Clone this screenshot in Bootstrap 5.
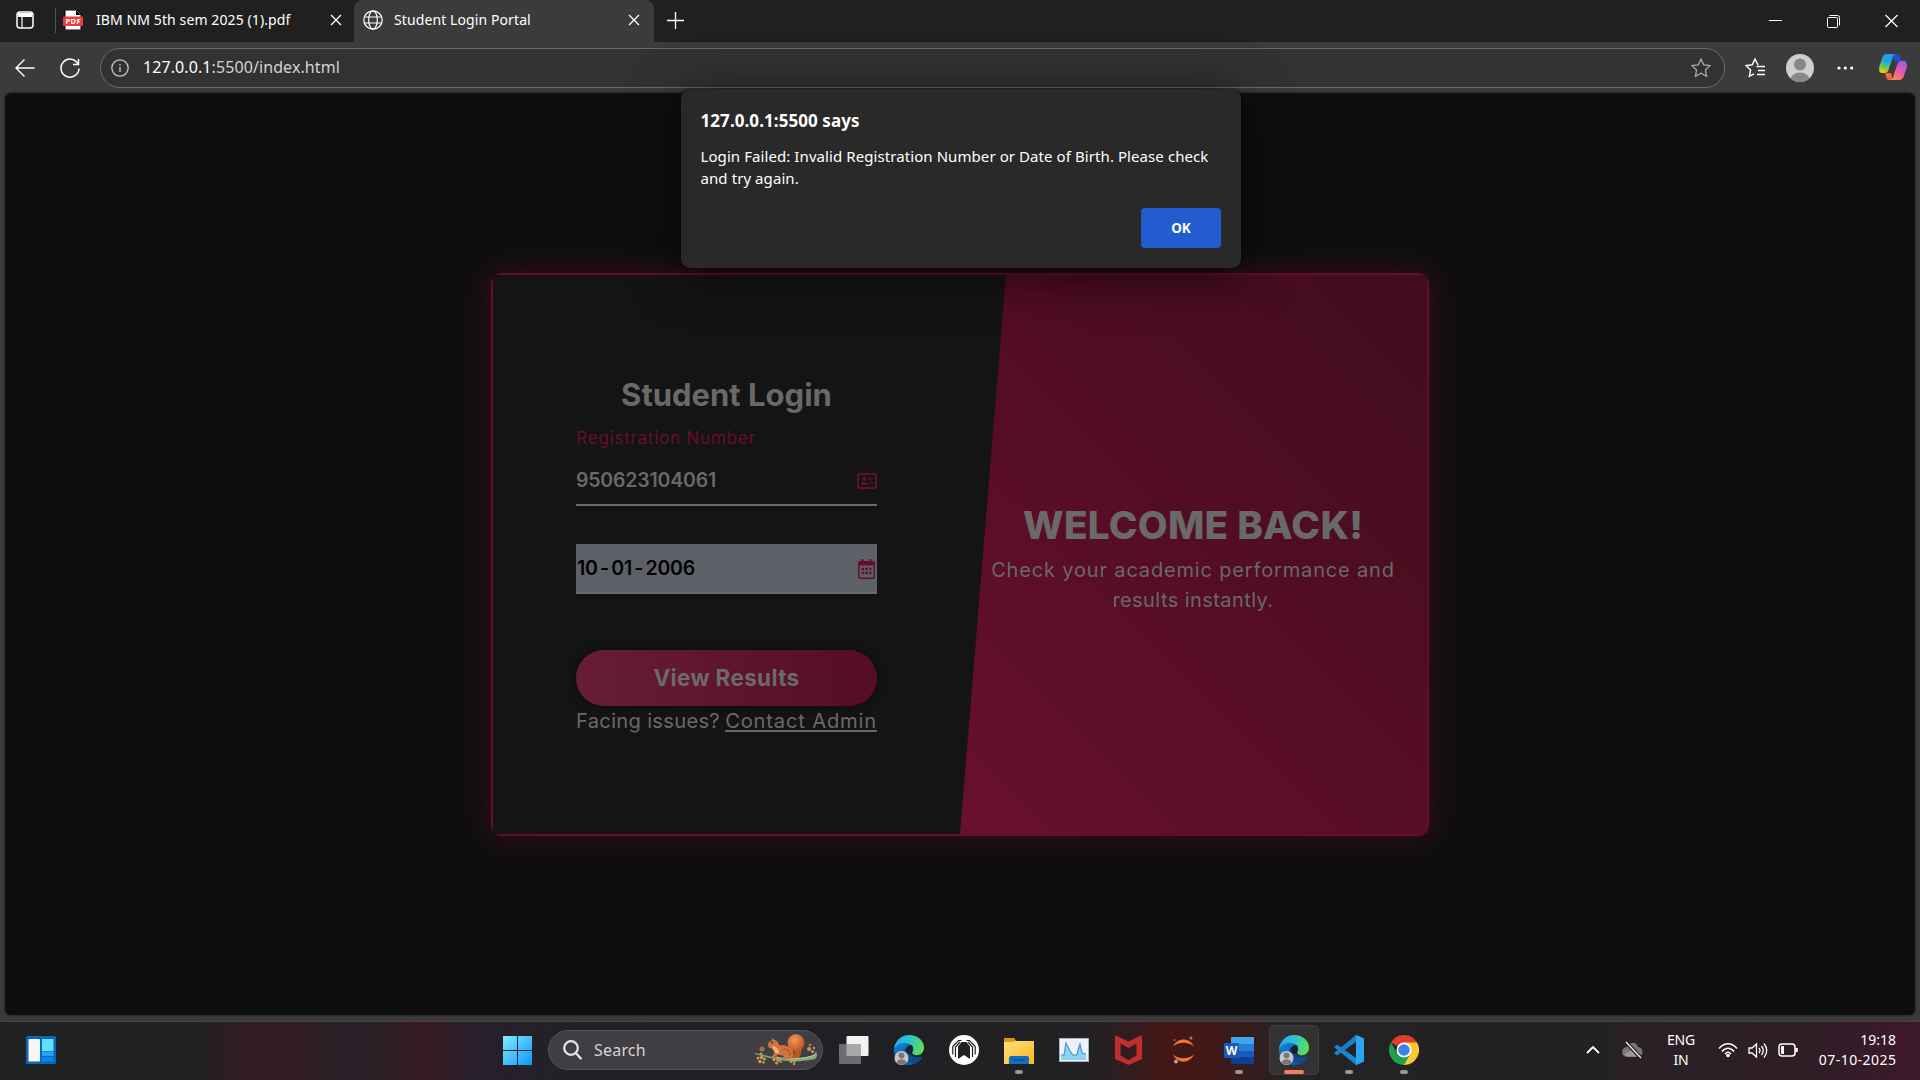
<!DOCTYPE html>
<html lang="en">
<head>
<meta charset="utf-8">
<title>Student Login Portal</title>
<link href="https://cdn.jsdelivr.net/npm/bootstrap@5.3.0/dist/css/bootstrap.min.css" rel="stylesheet">
<style>
body{width:1920px;height:1080px;overflow:hidden;background:#3b3b3b;color:#fff;font-family:"Noto Sans",sans-serif;font-size:14px}
svg{display:block;flex:none}
span,h1,h2,p{white-space:nowrap}
.tabstrip{height:42px;background:#202020}
.tab-idle{width:354px;padding-left:16px;padding-right:12px;height:40px}
.tab-live{width:300px;height:42px;background:#3b3b3b;border-radius:9px 9px 0 0;padding:0 14px 2px 9px}
.tabsep{width:1px;height:25px;background:#555;margin:0 7px 0 21px}
.tabname{letter-spacing:.1px;margin-left:11px;padding-bottom:2px}
.tab-idle .tabname{margin-left:13px}
.toolbar{height:51px;padding-left:15px}
.omnibox{width:1625px;height:40px;border:1px solid #6b6b6b;border-radius:20px;background:#323232;margin-left:20px;padding:0 13px 0 10px}
.address{font-size:16px;letter-spacing:.09px;margin-left:14px;padding-bottom:1px}
.address i{font-style:normal;color:#d2d2d2}
.viewport{height:922px;margin:0 5px;background:#0e0e10;border-radius:6px;box-shadow:0 0 3px #1a1a1a}
.panel{width:938px;height:563px;margin:180px 0 0 486px;border:2px solid #640f2a;border-radius:11px;box-shadow:0 0 31px rgba(110,14,46,.52);font-family:Inter,sans-serif;color:#696969}
.panel-in{height:559px;background:#141414}
.panel-in::before{content:"";position:absolute;inset:0 0 0 467px;background:linear-gradient(45deg,#69102d,#540d24 50%,#400d1d);clip-path:polygon(46px 0,100% 0,100% 100%,0 100%)}
.formcol{width:384px;padding:0 0 2px 83px}
.welcomecol{width:404px;margin-left:114px;padding-top:1px}
.h-login{font-size:31px;line-height:46px;font-weight:700;margin-bottom:9px}
.lab{font-size:17.3px;line-height:22px;letter-spacing:.64px;color:#640f2a;margin-bottom:7px}
.fieldx{height:50px;border-bottom:2px solid #6a6a6a;padding-top:2px;font-size:19.5px;font-weight:600;letter-spacing:-.19px}
.dob{margin-top:38px;background:#5d6067;color:#000;padding-left:1px}
.dsh{padding:0 2.3px}
.btn-view{height:56px;margin-top:56px;border:0;border-radius:28px;background:linear-gradient(90deg,#681d37,#560c24);box-shadow:0 0 10px rgba(0,0,0,.5);color:#6a6a6a;font-size:22.5px;font-weight:700;letter-spacing:.33px}
.help{font-size:20.2px;line-height:30px;letter-spacing:.28px}
.help u{letter-spacing:.8px;text-decoration-thickness:2px;text-underline-offset:2px}
.h-welcome{font-size:38.7px;line-height:60px;font-weight:800;letter-spacing:.24px}
.sub{font-size:20px;line-height:30px;letter-spacing:.84px}
.sub .second{letter-spacing:.43px}
.alertbox{left:681px;top:89px;width:560px;height:179px;background:#292929;border-radius:9px;box-shadow:0 8px 50px rgba(0,0,0,.6),0 0 2px #000;padding:22px 20px 20px 19.500px}
.alertbox .ttl{font-size:17px;line-height:20px;font-weight:700;letter-spacing:.07px;margin-bottom:14px}
.alertbox .msg{font-size:15px;line-height:22px;letter-spacing:.08px}
.btn-ok{width:80px;height:40px;background:#235ccf;border-radius:4px;font-size:13.5px;font-weight:700}
.taskbar{height:59px;margin-top:6px;padding-bottom:2px;background:linear-gradient(90deg,#202222 0,#202222 190px,#321c24 250px,#301c24 310px,#2a1f26 335px,#2a1f26 370px,#351b23 410px,#321a24 440px,#281e2e 470px,#232126 560px,#202024 700px,#212124 1090px,#451717 1170px,#401818 1215px,#2a2022 1280px,#232224 1330px,#212224 1600px,#2a2026 1625px,#2f1e26 1810px,#3d182b 1910px);border-top:1px solid #444}
.findbox{width:275px;height:40px;border-radius:20px;background:#403e43;border:1px solid #555358;margin:0 3px 0 16px;padding-left:14px}
.findbox span{font-size:16px;letter-spacing:.2px;color:#d4d4d4;margin-left:12px}
.app{width:55px;height:58px}
.app.live::before{content:"";position:absolute;left:3px;top:4px;width:50px;height:50px;background:#343133;border:1px solid #413d40;border-radius:5px}
.app.run::after,.app.live::after{content:"";position:absolute;left:24px;top:49px;width:8px;height:4px;border-radius:2px;background:#98969a}
.app.live::after{left:18px;width:20px;background:#f67c63}
.app svg{position:relative}
.lang{width:30px;line-height:20px;margin-left:22px;letter-spacing:-.2px}
.clock{width:80px;line-height:20px;margin-left:18px}
.clock .day{letter-spacing:.45px;margin-right:-.4px}
</style>
<script src="https://cdn.jsdelivr.net/npm/bootstrap@5.3.0/dist/js/bootstrap.bundle.min.js"></script>
</head>
<body>
<svg width="0" height="0" class="position-absolute">
<defs>
<linearGradient id="eg1" x1="0" y1="0.3" x2="1" y2="0.5"><stop offset="0" stop-color="#28a8e8"/><stop offset=".5" stop-color="#2cc3d0"/><stop offset="1" stop-color="#5fe04e"/></linearGradient>
<linearGradient id="eg2" x1="0" y1="0" x2="1" y2="1"><stop offset="0" stop-color="#1583d8"/><stop offset="1" stop-color="#0b4f9c"/></linearGradient>
<linearGradient id="fold" x1="0" y1="0" x2="1" y2="1"><stop offset="0" stop-color="#ffe07a"/><stop offset="1" stop-color="#f9b81f"/></linearGradient>
<linearGradient id="win" x1="0" y1="0" x2="1" y2="1"><stop offset="0" stop-color="#7cecff"/><stop offset="1" stop-color="#0d97fb"/></linearGradient>
<linearGradient id="cpa" x1="0.6" y1="0" x2="0.3" y2="1"><stop offset="0" stop-color="#2399f2"/><stop offset=".4" stop-color="#22a5e0"/><stop offset=".7" stop-color="#6bc558"/><stop offset="1" stop-color="#f7c916"/></linearGradient>
<linearGradient id="cpb" x1="0.6" y1="0" x2="0.2" y2="1"><stop offset="0" stop-color="#a259f0"/><stop offset=".5" stop-color="#e85aa0"/><stop offset="1" stop-color="#fb8a4c"/></linearGradient>
<radialGradient id="tail" cx=".4" cy=".35" r=".65"><stop offset="0" stop-color="#f09a58"/><stop offset="1" stop-color="#b95526"/></radialGradient>
<symbol id="edge" viewBox="0 0 30 30">
<path d="M0 15C0 8 6 5 12 6c6 1 8 5 6.500 9-2 2-3 4-1 6 3 2 8 2 11 .5C24 30 14 32 7 28 2 25 0 20 0 15z" fill="url(#eg2)"/>
<path d="M11 14c-3 8 2 16 12 13.500 3-1 5-4 5.500-6-3 1.500-8 1.500-11-.5-2-2-1-4 0-6-1-3-5-4-6.500-1z" fill="#0c4a93"/>
<path d="M0 14C1 6 7 0 15 0c9 0 15 6 15 12.500 0 6-5 8.500-9 7.500-3-.7-3.500-2-2.500-3.500C21 11 16 8 11 8 6 8 2 10 0 14z" fill="url(#eg1)"/>
<path d="M18.500 16.500c1.500-2.500.5-5-1-6.500-4 0-6 3-5.500 6 .5 2 3 4 7 3.500-1-.8-1.200-1.800-.5-3z" fill="#1d222a"/>
<circle cx="7.500" cy="23" r="7" fill="#c9c7c5"/><circle cx="7.500" cy="20.500" r="3" fill="#7a7775"/><path d="M2.500 27.500c1-4.500 9-4.500 10 0-2.500 3-7.500 3-10 0z" fill="#7a7775"/>
</symbol>
</defs>
</svg>

<header class="tabstrip d-flex align-items-start">
<div class="tab-idle d-flex align-items-center">
<svg width="18" height="18" fill="none" stroke="#fff" stroke-width="1.500"><rect x="1" y="1" width="16" height="16" rx="3"/><path d="M6 6v11" stroke-width="1.200"/><path d="M2 2h14v4H2z" fill="#fff" stroke="none"/></svg>
<div class="tabsep"></div>
<svg width="20" height="20"><path d="M2 0h12l4 4v16H2z" fill="#fff" stroke="#000"/><path d="M13 0l5 5h-5z" fill="#000"/><rect y="6.500" width="20" height="9.500" rx="1" fill="#ef3b3f"/><text x="10" y="14" text-anchor="middle" font-size="7.500" font-weight="700" fill="#fff" textLength="15">PDF</text></svg>
<span class="tabname me-auto">IBM NM 5th sem 2025 (1).pdf</span>
<svg width="12" height="12" stroke="#fff" stroke-width="1.300"><path d="M1 1l10 10M11 1L1 11"/></svg>
</div>
<div class="tab-live d-flex align-items-center">
<svg width="20" height="20" fill="none" stroke="#fff" stroke-width="1.200"><circle cx="10" cy="10" r="9.200"/><ellipse cx="10" cy="10" rx="4.300" ry="9.200"/><path d="M1.600 7h16.800M1.600 13h16.800"/></svg>
<span class="tabname me-auto">Student Login Portal</span>
<svg width="12" height="12" stroke="#fff" stroke-width="1.300"><path d="M1 1l10 10M11 1L1 11"/></svg>
</div>
<div class="d-flex align-items-center flex-grow-1" style="height:41px;padding:0 22px 0 13px">
<svg width="17" height="17" stroke="#fff" stroke-width="1.300"><path d="M8.500 0v17M0 8.500h17"/></svg>
<div class="d-flex align-items-center ms-auto" style="gap:45px">
<svg width="13" height="14"><path d="M0 6.500h13" stroke="#fff"/></svg>
<svg width="13" height="14" fill="none" stroke="#fff"><rect x=".5" y="3.500" width="10" height="10" rx="1"/><path d="M2.500 1.500h8a2 2 0 0 1 2 2v8"/></svg>
<svg width="13" height="14" stroke="#fff" stroke-width="1.200"><path d="M.5 1l12 12M12.500 1L.5 13"/></svg>
</div>
</div>
</header>

<nav class="toolbar d-flex align-items-center">
<svg width="20" height="20" fill="none" stroke="#fff" stroke-width="1.400"><path d="M19.500 10H1M9.500 1.500L1 10l8.500 8.500"/></svg>
<svg width="20" height="20" fill="none" stroke="#fff" stroke-width="1.500" style="margin-left:25px"><path d="M18 6A9 9 0 1 0 19 10.500M18.500 1v5.500H13"/></svg>
<div class="omnibox d-flex align-items-center">
<svg width="18" height="18" fill="none" stroke="#c8c8c8" stroke-width="1.300"><circle cx="9" cy="9" r="8.200"/><path d="M9 8v5M9 5v1.400"/></svg>
<span class="address">127.0.0.1<i>:5500/index.html</i></span>
<svg class="ms-auto" width="20" height="20" fill="none" stroke="#aaa" stroke-width="1.300"><path d="M10 1l2.700 5.800 6.300.8-4.600 4.400 1.200 6.300L10 15.200l-5.600 3.100L5.600 12 1 7.600l6.300-.8z"/></svg>
</div>
<svg width="20" height="20" fill="none" stroke="#fff" stroke-width="1.400" style="margin-left:20px"><path d="M13 7L10 1 7.300 6.800 1 7.600l4.600 4.400-1.200 6.300L9 15.800M11.500 8.500H20M13 12.500h7M12 16.500h8"/></svg>
<svg width="28" height="28" style="margin-left:21px"><clipPath id="avc"><circle cx="14" cy="14" r="14"/></clipPath><g clip-path="url(#avc)"><path d="M0 0h28v28H0z" fill="#d1cfcd"/><circle cx="14" cy="10.500" r="6" fill="#8a8886"/><ellipse cx="14" cy="27" rx="10" ry="8.500" fill="#8a8886"/></g></svg>
<svg width="16" height="4" fill="#fff" style="margin-left:23px"><circle cx="2" cy="2" r="1.600"/><circle cx="8.300" cy="2" r="1.600"/><circle cx="14.700" cy="2" r="1.600"/></svg>
<svg width="28" height="27" viewBox="0 0 28 27" style="margin-left:26px"><path d="M14 0h4.500c2 0 2.500 3 3.500 7.500h-6C14.500 7 15 1 14 0z" fill="#1f4fd6"/><path d="M14 26H9.500c-2 0-2.500-4-3.500-7h6c1 0 1 6 2 7z" fill="#f4633c"/><path d="M8 0h8c-2 1-2.500 4-3.500 7.500L9.500 16c-.7 2-2 3-4 3H3C0 19-.5 15 .8 11l2.700-8C4.500 1 6 0 8 0z" fill="url(#cpa)"/><path d="M20 26h-8c2-1 2.500-4 3.500-7.500L18.500 10c.7-2 2-3 4-3H25c3 0 3.500 4 2.200 8l-2.700 8c-1 2-2.500 3-4.500 3z" fill="url(#cpb)"/></svg>
</nav>

<main class="viewport d-flex align-items-start">
<section class="panel flex-shrink-0">
<div class="panel-in d-flex align-items-center position-relative">
<div class="formcol position-relative">
<h2 class="h-login text-center">Student Login</h2>
<div class="lab">Registration Number</div>
<div class="fieldx d-flex align-items-center justify-content-between"><span>950623104061</span>
<svg width="20" height="16" fill="none" stroke="#640f2a" stroke-width="2"><rect x="1" y="1" width="18" height="14" rx="1.500"/><path d="M11.500 6H16M12.500 10H16" stroke-width="1.600"/><circle cx="7.300" cy="5.800" r="2" fill="#640f2a" stroke="none"/><path d="M3.800 12c0-4.500 7-4.500 7 0z" fill="#640f2a" stroke="none"/></svg></div>
<div class="fieldx dob d-flex align-items-center justify-content-between"><span>10<span class="dsh">-</span>01<span class="dsh">-</span>2006</span>
<svg width="17" height="20" style="margin-right:2px"><path d="M2 2h13a2 2 0 0 1 2 2v14a2 2 0 0 1-2 2H2a2 2 0 0 1-2-2V4a2 2 0 0 1 2-2zM1.500 6.500V18.500h14V6.500z" fill="#640f2a" fill-rule="evenodd"/><path d="M4.500 0v4M12.500 0v4" stroke="#640f2a" stroke-width="2"/><path d="M3.500 10h10M3.500 14h10" stroke="#640f2a" stroke-width="2.300" stroke-dasharray="2.600 1.200"/></svg></div>
<button class="btn-view d-block w-100 p-0">View Results</button>
<div class="help d-flex justify-content-between"><span>Facing issues?</span><u>Contact Admin</u></div>
</div>
<div class="welcomecol position-relative text-center">
<h1 class="h-welcome m-0">WELCOME BACK!</h1>
<p class="sub m-0">Check your academic performance and<br><span class="second">results instantly.</span></p>
</div>
</div>
</section>
</main>

<div class="alertbox position-absolute d-flex flex-column" role="alertdialog">
<div class="ttl">127.0.0.1:5500 says</div>
<div class="msg text-nowrap">Login Failed: Invalid Registration Number or Date of Birth. Please check<br>and try again.</div>
<button class="btn-ok btn p-0 text-white border-0 ms-auto mt-auto">OK</button>
</div>

<footer class="taskbar d-flex align-items-center">
<svg width="30" height="28" style="margin-left:26px"><rect width="30" height="28" rx="1.500" fill="#0b66bd"/><rect x="2.500" y="3" width="11.500" height="22.500" rx="1" fill="#f6f6f6"/><path d="M16 3h11.500v12H16z" fill="#67dcff"/><path d="M16 15.500h11.500V20H16z" fill="#22a5f7"/><path d="M16 21h11.500v4.500H16z" fill="#0688f2"/></svg>
<svg width="29" height="29" style="margin-left:447px"><path d="M0 0h14v14H0zM15 0h14v14H15zM0 15h14v14H0zM15 15h14v14H15z" fill="url(#win)"/></svg>
<div class="findbox d-flex align-items-center">
<svg width="19" height="20" fill="none" stroke="#e8e8e8" stroke-width="2.200"><circle cx="8" cy="8" r="6.800"/><path d="M12.800 13l5 5.500" stroke-linecap="round"/></svg>
<span>Search</span>
<svg class="ms-auto me-1" width="64" height="34"><path d="M1 20c12 2 18 5 30 5.500 12 .5 24-1 29-4l2-3c2 4 1 7-3 8-20 4-36 1-58-5.500z" fill="#86a97a"/><path d="M22 24c12 3 28 2 39-2" stroke="#b9d3a8" fill="none"/><path d="M36 14l5 5-4 6h8c2-3 3-7 2-12z" fill="#b85827"/><ellipse cx="42" cy="10" rx="8.500" ry="9" fill="url(#tail)"/><path d="M14 12c0-3 3-4 4-5l.5-2 2 2c3 .5 4 3 5 5.500 6-1 12 1 13.500 6 1 4-1 7-5 7.500h-6l2-3-6-1.500-4 3.500h-3l3.500-5-2.500-4.500c-2.500 0-4-1-4-3.500z" fill="#d0733c"/><path d="M18 13l4 1 3 4-1 3-3-1.500z" fill="#f0b480"/><path d="M28 17c4-2 9 0 8 6" fill="none" stroke="#a84f22"/><circle cx="18" cy="9.500" r=".9" fill="#222"/><g fill="#c79d4b"><circle cx="8" cy="16" r="2.500" fill="#a9743c"/><circle cx="7" cy="21" r="1.500"/><circle cx="4" cy="25" r="1.500"/><circle cx="7.500" cy="24.500" r="1.800"/><circle cx="10.500" cy="26" r="1.500"/><circle cx="6" cy="28.500" r="1.800"/><circle cx="9.500" cy="29.500" r="1.300"/><circle cx="20" cy="27" r="1.400"/><circle cx="24" cy="27" r="1.800"/><circle cx="26.500" cy="28.500" r="1.300"/><circle cx="22.500" cy="30" r="1.500"/><circle cx="37" cy="28.500" r="1.500"/><circle cx="40.500" cy="28" r="1.800"/><circle cx="40" cy="31" r="1.200"/><circle cx="55" cy="16" r="2"/><circle cx="58.500" cy="18.500" r="1.500"/><circle cx="56" cy="12" r="1.500" fill="#a9743c"/><circle cx="60" cy="15" r="1.200"/></g></svg>
</div>
<div class="d-flex">
<div class="app position-relative d-flex align-items-center justify-content-center"><svg width="30" height="28"><rect x="7.500" width="22" height="20" rx="1" fill="#f2f2f2"/><rect y="8" width="22" height="20" rx="1" fill="#767678" fill-opacity=".9"/><path d="M7.500 8H22v12H7.500z" fill="#a9a9aa"/></svg></div>
<div class="app position-relative d-flex align-items-center justify-content-center"><svg width="30" height="30"><use href="#edge"/></svg></div>
<div class="app position-relative d-flex align-items-center justify-content-center"><svg width="30" height="30" fill="none"><circle cx="15" cy="15" r="15" fill="#fff"/><path d="M9 24V11.500L12.500 7h5L21 11.500V24l-6-4z" fill="#222224"/><path d="M3.800 19.500v-8L9.500 5.500h3M6.500 22v-10L11 7M26.200 19.500v-8L20.500 5.500h-3M23.500 22v-10L19 7" stroke="#222224" stroke-width="1.200"/></svg></div>
<div class="app run position-relative d-flex align-items-center justify-content-center"><svg width="30" height="27"><path d="M0 1h10l3 4v8H0z" fill="#d99b0a"/><path d="M0 5h9l2-1h19v23H0z" fill="url(#fold)"/><path d="M5 27v-6a2 2 0 0 1 2-2h16a2 2 0 0 1 2 2v6z" fill="#0f6fc0"/><path d="M9 23h12" stroke="#0a4a8a" stroke-width="1.300"/></svg></div>
<div class="app position-relative d-flex align-items-center justify-content-center"><svg width="30" height="24"><rect x=".5" y=".5" width="29" height="23" fill="#eef2f6" stroke="#aab4bf"/><path d="M2 22v-5l3 0 2-12 4 8 3 4 4 0 1-5 2-6 2 9 4 1v6z" fill="#8fd0f5"/><path d="M2 17h3l2-12 4 8 3 4h4l1-5 2-6 2 9 4 1" fill="none" stroke="#3d9ad4" stroke-width="1.200"/></svg></div>
<div class="app position-relative d-flex align-items-center justify-content-center"><svg width="27" height="30"><path d="M0 0l13.500 6.500L27 0v24l-13.500 6L0 24zM5.500 8.500v12l8 4.500 8-4.500v-12l-8 4.500z" fill="#c22e2d" fill-rule="evenodd"/></svg></div>
<div class="app position-relative d-flex align-items-center justify-content-center"><svg width="21" height="28"><path d="M0 10.500C4 1 17 1 21 10.500 15 5.500 6 5.500 0 10.500zM0 18.500C4 28 17 28 21 18.500 15 23.500 6 23.500 0 18.500z" fill="#f37726"/><circle cx="18" cy="2" r="1.500" fill="#8a8888"/><circle cx="1.500" cy="4" r="1" fill="#777"/><circle cx="3" cy="25.500" r="1.900" fill="#a9a9a9"/></svg></div>
<div class="app run position-relative d-flex align-items-center justify-content-center"><svg width="30" height="27"><path d="M7 0h23v7H7z" fill="#41a5ee"/><path d="M7 7h23v7H7z" fill="#2b7cd3"/><path d="M7 14h23v6.500H7z" fill="#185abd"/><path d="M7 20.500h23V27H7z" fill="#103f91"/><rect y="6" width="15" height="15" rx="1" fill="#185abd"/><text x="7.500" y="18" text-anchor="middle" font-size="12" font-weight="700" fill="#fff">W</text></svg></div>
<div class="app live position-relative d-flex align-items-center justify-content-center"><svg width="30" height="30"><use href="#edge"/></svg></div>
<div class="app run position-relative d-flex align-items-center justify-content-center"><svg width="30" height="30"><path d="M22 0l8 3.500v23L22 30 0 12l3-2.500L22 23z" fill="#1a86d0"/><path d="M0 18l3 2.500L22 7V0z" fill="#1b7fc6"/><path d="M22 0l8 3.500v23L22 30z" fill="#2ba6f2"/></svg></div>
<div class="app run position-relative d-flex align-items-center justify-content-center"><svg width="30" height="30"><path d="M15 15L2 7.500A15 15 0 0 1 28 7.500z" fill="#e33b2e"/><path d="M15 15V7.500h13A15 15 0 0 1 15 30z" fill="#fcc934"/><path d="M15 15l6.500 3.800L15 30A15 15 0 0 1 2 7.500l6.500 11.300z" fill="#1fa04b"/><circle cx="15" cy="15" r="7.500" fill="#fff"/><circle cx="15" cy="15" r="5.800" fill="#3b82ee"/></svg></div>
</div>
<svg width="14" height="8" fill="none" stroke="#fff" stroke-width="1.800" style="margin-left:155px"><path d="M1 7l6-6 6 6"/></svg>
<svg width="22" height="18" style="margin-left:22px"><path d="M5 16a5 5 0 0 1 0-10c2-6 10-5 11 0 6 0 6 10 0 10z" fill="#77747a"/><path d="M2 14c4-4 10-7 16-2-1 5-12 4-16 2z" fill="#9b989d"/><path d="M4 1l15 16" stroke="#2b2026" stroke-width="4"/><path d="M4 1l15 16" stroke="#eee" stroke-width="1.300"/></svg>
<div class="lang text-center">ENG<br>IN</div>
<svg width="20" height="16" fill="none" stroke="#fff" stroke-width="1.500" style="margin-left:22px"><path d="M1 6.500c5-6.500 13-6.500 18 0M4 9.500c3.500-4.500 8.500-4.500 12 0M7 12c2-2.300 4-2.300 6 0"/><circle cx="10" cy="13.500" r="1.800" fill="#fff" stroke="none"/></svg>
<svg width="20" height="17" fill="none" stroke="#fff" stroke-width="1.300" style="margin-left:10px"><path d="M1 6h3l4.500-4v13L4 11H1zM11 6q2 2.500 0 5M13.500 4q3.500 4.500 0 9M16 1.500q5.500 7 0 14"/></svg>
<svg width="20" height="14" fill="none" stroke="#fff" stroke-width="1.500" style="margin-left:10px"><rect x="1" y="1" width="16" height="12" rx="3"/><path d="M3 4q0-1 1-1h2v8H4q-1 0-1-1z" fill="#fff" stroke="none"/><path d="M18.500 5v4" stroke-width="2.500"/></svg>
<div class="clock text-end">19:18<br><span class="day">07-10-2025</span></div>
</footer>
</body>
</html>
